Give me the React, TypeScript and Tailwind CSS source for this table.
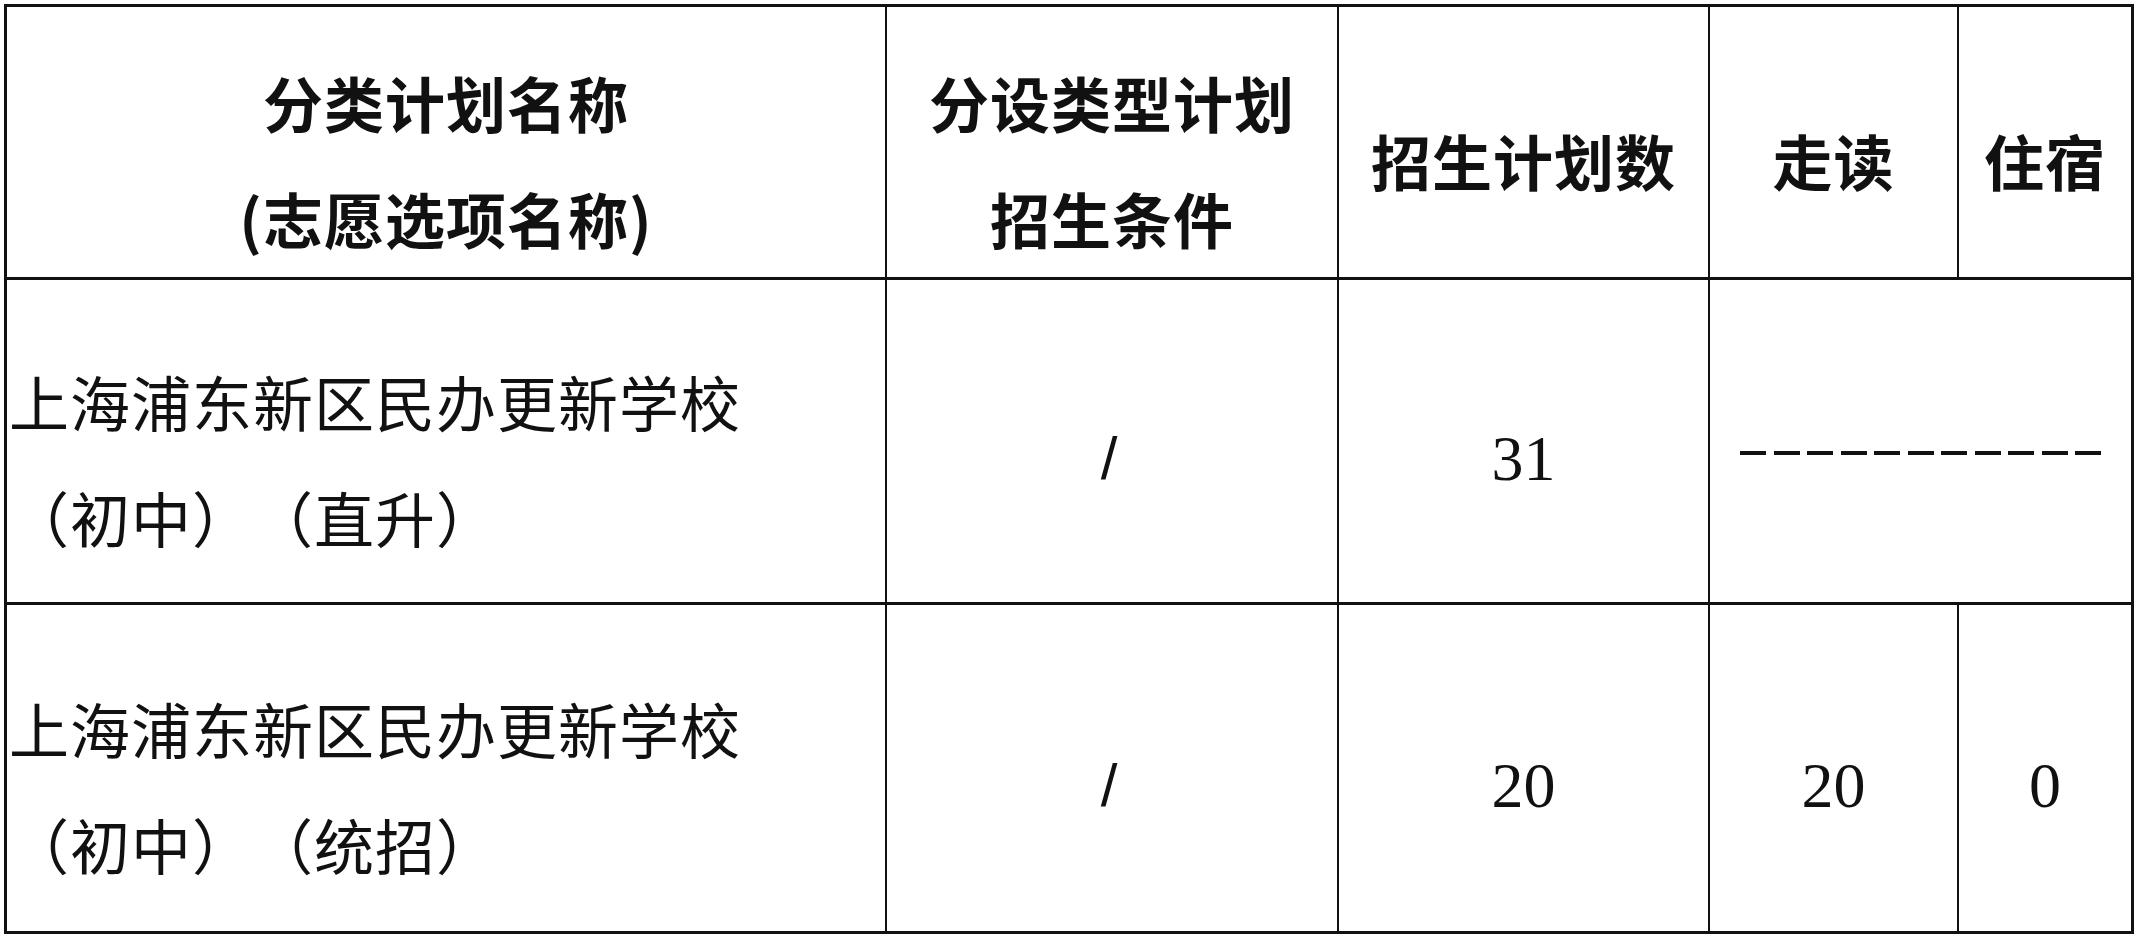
import React from "react";

const CJK = "font-['Noto_Sans_CJK_SC','Noto_Sans',sans-serif]";
const NUM = "font-['Liberation_Serif',serif]";

function Cell({
  children,
  className = "",
}: {
  children?: React.ReactNode;
  className?: string;
}) {
  return (
    <div
      className={`bg-white flex flex-col justify-center pt-[36px] ${className}`}
    >
      {children}
    </div>
  );
}

function HeadText({ lines }: { lines: string[] }) {
  return (
    <>
      {lines.map((l) => (
        <div
          key={l}
          className={`${CJK} text-[60px] leading-[116px] font-bold tracking-[1px] text-[#111] whitespace-nowrap`}
        >
          {l}
        </div>
      ))}
    </>
  );
}

function SchoolName({ type }: { type: string }) {
  return (
    <Cell className="items-start pl-[2px]">
      <div
        className={`${CJK} text-[60px] leading-[116px] tracking-[1px] text-[#111] whitespace-nowrap [text-spacing-trim:space-all]`}
      >
        上海浦东新区民办更新学校
      </div>
      <div
        className={`${CJK} text-[60px] leading-[116px] tracking-[1px] text-[#111] whitespace-nowrap [text-spacing-trim:space-all]`}
      >
        （初中）（{type}）
      </div>
    </Cell>
  );
}

function Num({ value }: { value: string }) {
  return (
    <Cell className="items-center">
      <span className={`${NUM} text-[64px] leading-[116px] text-[#111]`}>
        {value}
      </span>
    </Cell>
  );
}

function Slash() {
  return (
    <Cell className="items-center">
      <span
        className="font-['Liberation_Sans',sans-serif] text-[60px] leading-[116px] text-[#111] -ml-[6px]"
      >
        /
      </span>
    </Cell>
  );
}

export default function App() {
  return (
    <div className="min-h-screen bg-white pt-[4px] pl-[4px]">
      <div className="grid w-fit grid-cols-[878px_450px_369px_247px_172px] grid-rows-[270px_322px_326px] gap-x-[2px] gap-y-[3px] border-[3px] border-[#111] bg-[#111]">
        {/* header */}
        <Cell className="items-center">
          <HeadText lines={["分类计划名称", "(志愿选项名称)"]} />
        </Cell>
        <Cell className="items-center">
          <HeadText lines={["分设类型计划", "招生条件"]} />
        </Cell>
        <Cell className="items-center">
          <HeadText lines={["招生计划数"]} />
        </Cell>
        <Cell className="items-center">
          <HeadText lines={["走读"]} />
        </Cell>
        <Cell className="items-center">
          <HeadText lines={["住宿"]} />
        </Cell>

        {/* row 1 */}
        <SchoolName type="直升" />
        <Slash />
        <Num value="31" />
        <Cell className="col-span-2 items-center">
          <div className="flex gap-[7.5px] mb-[12px]">
            {Array.from({ length: 11 }).map((_, i) => (
              <div key={i} className="w-[26px] h-[4px] bg-[#111]" />
            ))}
          </div>
        </Cell>

        {/* row 2 */}
        <SchoolName type="统招" />
        <Slash />
        <Num value="20" />
        <Num value="20" />
        <Num value="0" />
      </div>
    </div>
  );
}
